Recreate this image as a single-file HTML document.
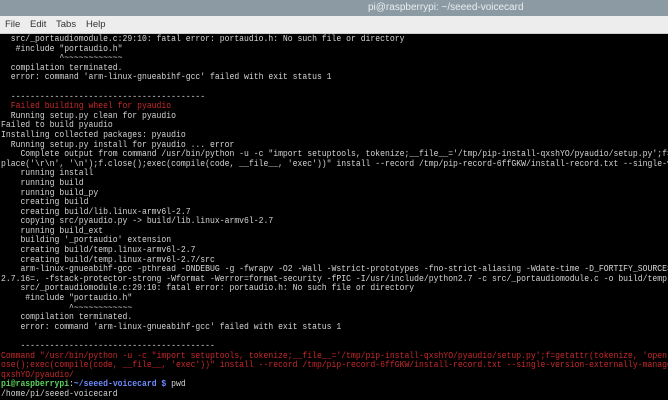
<!DOCTYPE html>
<html><head><meta charset="utf-8"><style>
html,body{margin:0;padding:0;width:668px;height:400px;overflow:hidden;background:#000;}
#title{position:absolute;left:0;top:0;width:668px;height:16px;background:#8c9aa3;color:#e8eef2;font:10px "Liberation Sans",sans-serif;}
#title span{position:absolute;left:368px;top:2px;}
#menu{position:absolute;left:0;top:16px;width:668px;height:17px;background:#ededed;font:9.5px "Liberation Sans",sans-serif;color:#333;border-bottom:1px solid #ccc;}
#menu span{position:absolute;top:3px;}
#term{position:absolute;left:1px;top:35px;width:1000px;transform:scaleX(0.9);transform-origin:0 0;font:9px/9.6px "Liberation Mono",monospace;color:#d4d4d4;white-space:pre;margin:0;}
.r{color:#c8282a}.g{color:#5ad25a;font-weight:bold}.b{color:#6f8cff;font-weight:bold}
</style></head><body>
<div id="title"><span>pi@raspberrypi: ~/seeed-voicecard</span></div>
<div id="menu"><span style="left:5px">File</span><span style="left:30px">Edit</span><span style="left:56px">Tabs</span><span style="left:86px">Help</span></div>
<pre id="term">  src/_portaudiomodule.c:29:10: fatal error: portaudio.h: No such file or directory
   #include "portaudio.h"
            ^~~~~~~~~~~~~
  compilation terminated.
  error: command 'arm-linux-gnueabihf-gcc' failed with exit status 1

  ----------------------------------------
<span class="r">  Failed building wheel for pyaudio</span>
  Running setup.py clean for pyaudio
Failed to build pyaudio
Installing collected packages: pyaudio
  Running setup.py install for pyaudio ... error
    Complete output from command /usr/bin/python -u -c "import setuptools, tokenize;__file__='/tmp/pip-install-qxshYO/pyaudio/setup.py';f=g
place('\r\n', '\n');f.close();exec(compile(code, __file__, 'exec'))" install --record /tmp/pip-record-6ffGKW/install-record.txt --single-ve
    running install
    running build
    running build_py
    creating build
    creating build/lib.linux-armv6l-2.7
    copying src/pyaudio.py -> build/lib.linux-armv6l-2.7
    running build_ext
    building '_portaudio' extension
    creating build/temp.linux-armv6l-2.7
    creating build/temp.linux-armv6l-2.7/src
    arm-linux-gnueabihf-gcc -pthread -DNDEBUG -g -fwrapv -O2 -Wall -Wstrict-prototypes -fno-strict-aliasing -Wdate-time -D_FORTIFY_SOURCE=2
2.7.16=. -fstack-protector-strong -Wformat -Werror=format-security -fPIC -I/usr/include/python2.7 -c src/_portaudiomodule.c -o build/temp.l
    src/_portaudiomodule.c:29:10: fatal error: portaudio.h: No such file or directory
     #include "portaudio.h"
              ^~~~~~~~~~~~~
    compilation terminated.
    error: command 'arm-linux-gnueabihf-gcc' failed with exit status 1

    ----------------------------------------
<span class="r">Command "/usr/bin/python -u -c "import setuptools, tokenize;__file__='/tmp/pip-install-qxshYO/pyaudio/setup.py';f=getattr(tokenize, 'open',
ose();exec(compile(code, __file__, 'exec'))" install --record /tmp/pip-record-6ffGKW/install-record.txt --single-version-externally-managed
qxshYO/pyaudio/</span>
<span class="g">pi@raspberrypi</span>:<span class="b">~/seeed-voicecard $</span> pwd
/home/pi/seeed-voicecard</pre>
</body></html>
